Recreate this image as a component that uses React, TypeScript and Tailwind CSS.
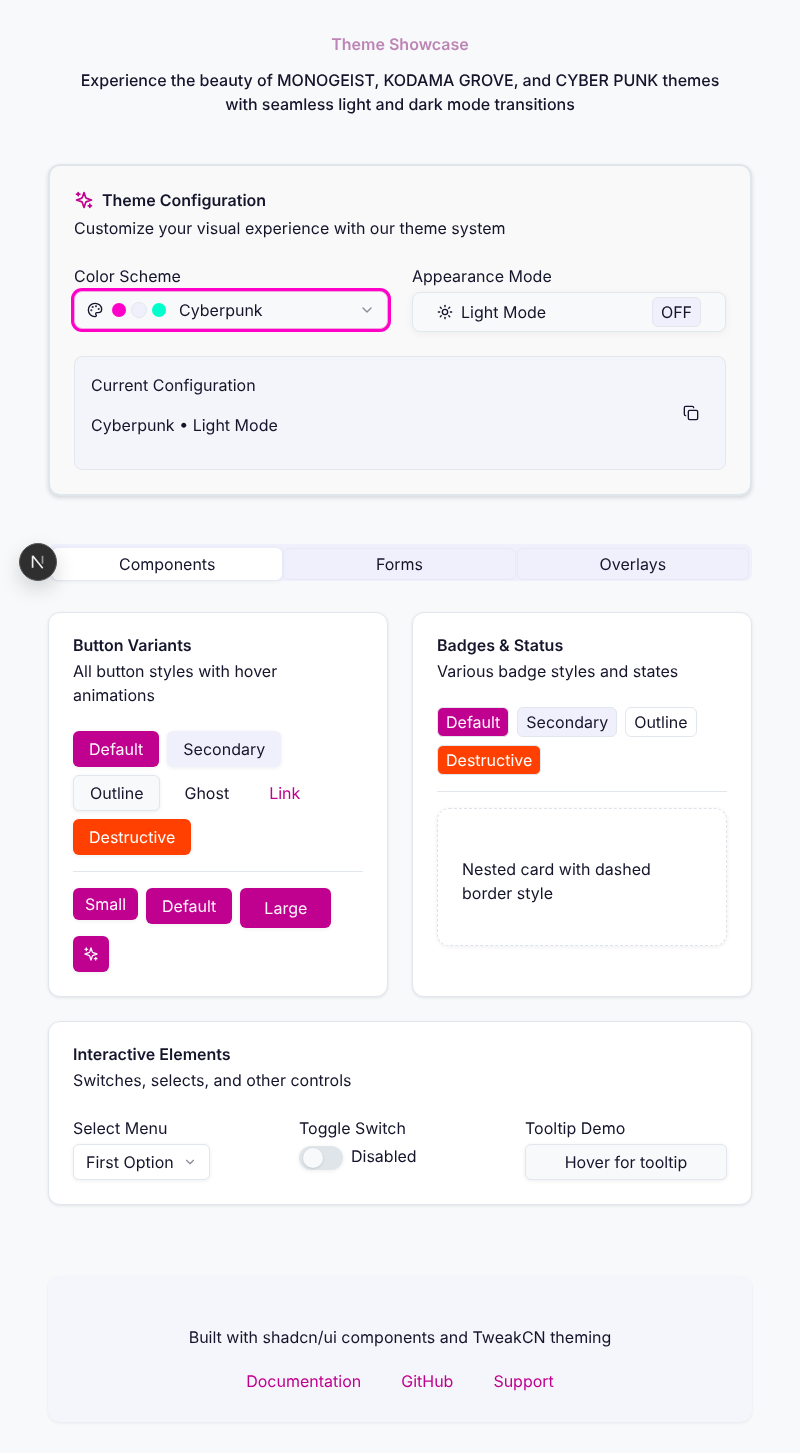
import { ChevronDown, Copy, Palette, Sun } from 'lucide-react';

// Older lucide sparkles glyph: plus marks top-left and bottom-right
function Sparkle({ className }: { className?: string }) {
  return (
    <svg viewBox="0 0 24 24" fill="none" stroke="currentColor" strokeWidth="2" strokeLinecap="round" strokeLinejoin="round" className={className}>
      <path d="m12 3-1.912 5.813a2 2 0 0 1-1.275 1.275L3 12l5.813 1.912a2 2 0 0 1 1.275 1.275L12 21l1.912-5.813a2 2 0 0 1 1.275-1.275L21 12l-5.813-1.912a2 2 0 0 1-1.275-1.275L12 3Z" />
      <path d="M5 3v4" />
      <path d="M19 17v4" />
      <path d="M3 5h4" />
      <path d="M17 19h4" />
    </svg>
  );
}

function Card({ title, sub, children, className = '' }: { title: string; sub: string; children: React.ReactNode; className?: string }) {
  return (
    <div className={`rounded-xl border border-[#e1e7ec] bg-white px-6 pt-5 shadow-[0_1px_3px_rgba(20,30,50,0.1)] ${className}`}>
      <h3 className="font-semibold leading-6">{title}</h3>
      <p className="mt-0.5 mb-6 leading-6">{sub}</p>
      {children}
    </div>
  );
}

const soft = 'shadow-[0_1px_4px_rgba(20,30,50,0.07)]';
const primary = `rounded-md bg-[#c0008f] text-[#fdf5fb] ${soft} flex items-center justify-center`;

export default function App() {
  return (
    <div className="min-h-[1453px] bg-[#f8f9fb]">
      <div className="px-12 pt-8 text-[#14142b] antialiased will-change-transform [font-family:Inter,'Noto_Sans',sans-serif] [text-rendering:geometricPrecision]">
        <header className="text-center">
          <h1 className="font-semibold leading-6 text-[#bd85b5]">Theme Showcase</h1>
          <p className="mt-3 font-medium leading-6">
            Experience the beauty of MONOGEIST, KODAMA GROVE, and CYBER PUNK themes
            <br />
            with seamless light and dark mode transitions
          </p>
        </header>

        <section className="mt-[48px] h-[332px] rounded-xl border-2 border-[#dfe6ec] bg-[#f9f9f9] px-6 pt-[22px] shadow-[0_2px_4px_rgba(20,30,50,0.15)]">
          <div className="flex h-6 items-center gap-2 font-semibold">
            <Sparkle className="h-5 w-5 text-[#c0008f]" />
            Theme Configuration
          </div>
          <p className="mt-1 leading-6">Customize your visual experience with our theme system</p>
          <div className="mt-[24px] grid grid-cols-2 gap-6">
            <div>
              <div className="mb-1 leading-6">Color Scheme</div>
              <div className="-mt-px flex h-[38px] items-center rounded-lg border border-[#f3a6e0] bg-[#f8f9fb] pr-3 pl-3 shadow-[0_0_0_3px_#ff00c8]">
                <Palette size={16} />
                <span className="ml-[9px] h-3.5 w-3.5 rounded-full bg-[#ff00c8]" />
                <span className="ml-[5px] h-4 w-4 rounded-full border border-[#e1e7ec] bg-[#f0f0fd]" />
                <span className="ml-[5px] h-3.5 w-3.5 rounded-full bg-[#00ffcc]" />
                <span className="ml-[13px] flex-1">Cyberpunk</span>
                <ChevronDown size={16} className="text-[#8a8a98]" />
              </div>
            </div>
            <div>
              <div className="mb-1 leading-6">Appearance Mode</div>
              <div className="flex h-10 items-center rounded-lg border border-[#e1e7ec] bg-[#f8f9fb] pr-6 pl-6 shadow-[0_2px_8px_rgba(20,30,50,0.05)]">
                <Sun size={16} />
                <span className="ml-2 flex-1">Light Mode</span>
                <span className="flex h-[30px] w-[49px] items-center justify-center rounded-md border border-[#e1e7ec] bg-[#f0f0fd]">OFF</span>
              </div>
            </div>
          </div>
          <div className="mt-6 flex h-[114px] items-center justify-between rounded-lg border border-[#e1e7ec] bg-[#f4f5fa] pr-[26px] pl-4">
            <div className="mb-4">
              <div className="leading-6">Current Configuration</div>
              <div className="mt-4 leading-6">Cyberpunk • Light Mode</div>
            </div>
            <Copy size={16} />
          </div>
        </section>

        <div className="relative mt-[48px] flex h-[37px] items-end gap-px rounded-lg bg-[#f0f0fd] pr-[3px] pb-px pl-1">
          <div className={`flex h-8 flex-1 items-center justify-center rounded-md bg-white ${soft}`}>Components</div>
          <div className="flex h-8 flex-1 items-center justify-center rounded-md border border-[#e9e9f5]">Forms</div>
          <div className="flex h-8 flex-1 items-center justify-center rounded-md border border-[#e9e9f5]">Overlays</div>
          <div className="absolute top-[-1px] left-[-29px] flex h-[38px] w-[38px] items-center justify-center rounded-full border border-[#555] bg-[#2f2f2f] shadow-[0_8px_20px_rgba(0,0,0,0.16)]">
            <svg viewBox="0 0 16 16" className="h-[18px] w-[18px]">
              <path d="M3.2 2.5v10.5M3.2 2.5l9 11" stroke="#eee" strokeWidth="1.5" fill="none" />
              <path d="M12 2.5v7" stroke="#999" strokeWidth="1.5" fill="none" />
            </svg>
          </div>
        </div>

        <div className="mt-[31px] grid grid-cols-2 items-stretch gap-6">
          <Card title="Button Variants" sub="All button styles with hover animations" className="h-[385px]">
            <div className="flex flex-wrap gap-2">
              <div className={`${primary} h-9 px-4`}>Default</div>
              <div className={`flex h-9 items-center justify-center rounded-md bg-[#f0f0fd] px-4 ${soft}`}>Secondary</div>
              <div className={`flex h-9 items-center justify-center rounded-md border border-[#e1e7ec] bg-[#f8f9fb] px-4 ${soft}`}>Outline</div>
              <div className="flex h-9 items-center justify-center px-4">Ghost</div>
              <div className="flex h-9 items-center justify-center px-4 text-[#c0008f]">Link</div>
              <div className={`flex h-9 items-center justify-center rounded-md bg-[#ff4000] px-4 text-white ${soft}`}>Destructive</div>
            </div>
            <div className="my-4 h-px bg-[#e1e7ec]" />
            <div className="flex flex-wrap items-start gap-2">
              <div className={`${primary} h-8 px-3`}>Small</div>
              <div className={`${primary} h-9 px-4`}>Default</div>
              <div className={`${primary} h-10 px-6`}>Large</div>
              <div className={`${primary} h-9 w-9`}>
                <Sparkle className="h-4 w-4" />
              </div>
            </div>
          </Card>

          <Card title="Badges & Status" sub="Various badge styles and states" className="h-[385px]">
            <div className="flex flex-wrap gap-2">
              <span className="flex h-[30px] items-center rounded-md border border-[#e1e7ec] bg-[#c0008f] px-2 text-[#fdf5fb]">Default</span>
              <span className="flex h-[30px] items-center rounded-md border border-[#e1e7ec] bg-[#f0f0fd] px-2">Secondary</span>
              <span className="flex h-[30px] items-center rounded-md border border-[#e1e7ec] px-2">Outline</span>
              <span className="flex h-[30px] items-center rounded-md border border-[#e1e7ec] bg-[#ff4000] px-2 text-white">Destructive</span>
            </div>
            <div className="my-4 h-px bg-[#e1e7ec]" />
            <div className={`flex h-[138px] items-center rounded-xl border border-dashed border-[#dde3e9] px-6 pt-2 ${soft}`}>
              <p className="leading-6">
                Nested card with dashed
                <br />
                border style
              </p>
            </div>
          </Card>
        </div>

        <Card title="Interactive Elements" sub="Switches, selects, and other controls" className="mt-6 h-[184px]">
          <div className="grid grid-cols-3 gap-6">
            <div>
              <div className="mb-1 leading-6">Select Menu</div>
              <div className={`flex h-9 w-[137px] items-center gap-[9px] rounded-md border border-[#e1e7ec] bg-white px-3 ${soft}`}>
                First Option
                <ChevronDown size={14} className="text-[#8a8a98]" />
              </div>
            </div>
            <div>
              <div className="mb-1 leading-6">Toggle Switch</div>
              <div className="flex items-center gap-2">
                <span className={`flex h-6 w-11 items-center rounded-full bg-[#dfe5e9] px-1 ${soft}`}>
                  <span className="h-5 w-5 rounded-full bg-[#f8f9fb] shadow-sm" />
                </span>
                <span className="mb-1">Disabled</span>
              </div>
            </div>
            <div>
              <div className="mb-1 leading-6">Tooltip Demo</div>
              <div className={`flex h-9 items-center justify-center rounded-md border border-[#e1e7ec] bg-[#f8f9fb] ${soft}`}>Hover for tooltip</div>
            </div>
          </div>
        </Card>

        <footer className="mt-[71px] flex h-[146px] flex-col items-center rounded-xl bg-[#f5f6fb] pt-[49px] shadow-[0_1px_3px_rgba(20,30,50,0.08)]">
          <p className="leading-6">Built with shadcn/ui components and TweakCN theming</p>
          <div className="mt-5 flex gap-10 text-[#c0008f]">
            <span className="leading-6">Documentation</span>
            <span className="leading-6">GitHub</span>
            <span className="leading-6">Support</span>
          </div>
        </footer>
      </div>
    </div>
  );
}
